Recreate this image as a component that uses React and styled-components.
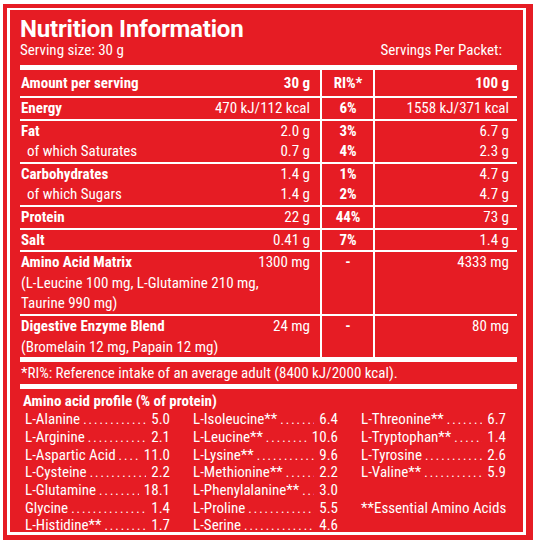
import React from 'react'
import styled, { createGlobalStyle } from 'styled-components'

const RED = '#e61c24'
const FONT = 'Roboto, "Liberation Sans", sans-serif'

const GlobalStyle = createGlobalStyle`
  html, body {
    margin: 0;
    background: #fff;
  }
  body {
    font-family: ${FONT};
    font-stretch: 75%;
  }
`

const Frame = styled.div`
  box-sizing: border-box;
  width: 530px;
  margin: 4px 0 0 3px;
  border: solid ${RED};
  border-width: 4px 7px 5px 4px;
  padding: 2px 3px 3px 3px;
  background: #fff;
`

const Panel = styled.div`
  box-sizing: border-box;
  height: 522px;
  background: ${RED};
  color: #fff;
  padding: 7px 6px 0 10px;
  font-size: 15px;
`

const Title = styled.h1`
  margin: 0;
  font-size: 24px;
  line-height: 25px;
  font-weight: 700;
  font-stretch: 100%;
  letter-spacing: -0.2px;
`

const ServingBar = styled.div`
  display: flex;
  justify-content: space-between;
  align-items: baseline;
  line-height: 18px;
  margin-top: -1px;
  padding: 0 15px 6px 0;
  border-bottom: 5px solid #fff;
`

const Table = styled.div`
  border-bottom: 5px solid #fff;
`

const Row = styled.div`
  display: grid;
  grid-template-columns: 300px 53px 144px;
  border-bottom: ${p => (p.$last ? 'none' : '2px solid #fff')};
  line-height: ${p => (p.$head ? '26px' : '20.6px')};
  font-weight: ${p => (p.$head ? 700 : 400)};
  font-stretch: ${p => (p.$head ? '80%' : 'inherit')};
`

const Cell = styled.div`
  box-sizing: border-box;
  padding: ${p => p.$pad};
  border-left: ${p => (p.$first ? 'none' : '2px solid #fff')};
  text-align: ${p => p.$align || 'left'};
  font-weight: ${p => (p.$bold ? 700 : 'inherit')};
  font-stretch: ${p => (p.$bold ? '80%' : 'inherit')};
`

const Line = styled.div`
  display: flex;
  justify-content: space-between;
  white-space: nowrap;
`

const Label = styled.span`
  font-weight: ${p => (p.$bold ? 700 : 'inherit')};
  font-stretch: ${p => (p.$bold ? '80%' : 'inherit')};
  padding-left: ${p => (p.$sub ? '7px' : '1px')};
`

const Note = styled.div`
  padding-left: 1px;
`

const Footnote = styled.div`
  line-height: 22px;
  padding-left: 1px;
  border-bottom: 5px solid #fff;
`

const Profile = styled.div`
  padding: 3px 0 0 3px;
`

const ProfileTitle = styled.div`
  font-weight: 700;
  font-stretch: 80%;
  line-height: 19px;
`

const ProfileGrid = styled.div`
  display: grid;
  grid-template-columns: repeat(3, 145px);
  column-gap: 23px;
  padding-left: 2px;
`

const Item = styled.div`
  display: flex;
  height: 17.7px;
  line-height: 17.7px;
  white-space: nowrap;
`

const Dots = styled.span`
  flex: 1;
  min-width: 0;
  overflow: hidden;
  margin: 0 5px 0 3px;
  letter-spacing: 2px;
  font-size: 13px;
`

const Essential = styled.div`
  line-height: 17.7px;
  margin-top: 17.7px;
  white-space: nowrap;
`

const rows = [
  [{ label: 'Energy', bold: true, a: '470 kJ/112 kcal', ri: '6%', b: '1558 kJ/371 kcal' }],
  [
    { label: 'Fat', bold: true, a: '2.0 g', ri: '3%', b: '6.7 g' },
    { label: 'of which Saturates', sub: true, a: '0.7 g', ri: '4%', b: '2.3 g' },
  ],
  [
    { label: 'Carbohydrates', bold: true, a: '1.4 g', ri: '1%', b: '4.7 g' },
    { label: 'of which Sugars', sub: true, a: '1.4 g', ri: '2%', b: '4.7 g' },
  ],
  [{ label: 'Protein', bold: true, a: '22 g', ri: '44%', b: '73 g' }],
  [{ label: 'Salt', bold: true, a: '0.41 g', ri: '7%', b: '1.4 g' }],
  [
    { label: 'Amino Acid Matrix', bold: true, a: '1300 mg', ri: '-', b: '4333 mg' },
    { note: '(L-Leucine 100 mg, L-Glutamine 210 mg,' },
    { note: 'Taurine 990 mg)' },
  ],
  [
    { label: 'Digestive Enzyme Blend', bold: true, a: '24 mg', ri: '-', b: '80 mg' },
    { note: '(Bromelain 12 mg, Papain 12 mg)' },
  ],
]

const amino = [
  [
    ['L-Alanine', '5.0'],
    ['L-Arginine', '2.1'],
    ['L-Aspartic Acid', '11.0'],
    ['L-Cysteine', '2.2'],
    ['L-Glutamine', '18.1'],
    ['Glycine', '1.4'],
    ['L-Histidine**', '1.7'],
  ],
  [
    ['L-Isoleucine**', '6.4'],
    ['L-Leucine**', '10.6'],
    ['L-Lysine**', '9.6'],
    ['L-Methionine**', '2.2'],
    ['L-Phenylalanine**', '3.0'],
    ['L-Proline', '5.5'],
    ['L-Serine', '4.6'],
  ],
  [
    ['L-Threonine**', '6.7'],
    ['L-Tryptophan**', '1.4'],
    ['L-Tyrosine', '2.6'],
    ['L-Valine**', '5.9'],
  ],
]

const DOTS = '..............................................'

function NutrientRow({ lines, last }) {
  return (
    <Row $last={last}>
      <Cell $first $pad="0 10px 0 0">
        {lines.map((l, i) =>
          l.note ? (
            <Note key={i}>{l.note}</Note>
          ) : (
            <Line key={i}>
              <Label $bold={l.bold} $sub={l.sub}>{l.label}</Label>
              <span>{l.a}</span>
            </Line>
          )
        )}
      </Cell>
      <Cell $align="center" $pad="0 0 0 1px" $bold>
        {lines.filter(l => !l.note).map((l, i) => (
          <div key={i}>{l.ri}</div>
        ))}
      </Cell>
      <Cell $align="right" $pad="0 8px 0 0">
        {lines.filter(l => !l.note).map((l, i) => (
          <div key={i}>{l.b}</div>
        ))}
      </Cell>
    </Row>
  )
}

export default function App() {
  return (
    <>
      <GlobalStyle />
      <Frame>
        <Panel>
          <Title>Nutrition Information</Title>
          <ServingBar>
            <span>Serving size: 30 g</span>
            <span>Servings Per Packet:</span>
          </ServingBar>

          <Table>
            <Row $head>
              <Cell $first $pad="0 10px 0 0">
                <Line>
                  <Label>Amount per serving</Label>
                  <span>30 g</span>
                </Line>
              </Cell>
              <Cell $align="center" $pad="0 0 0 1px">RI%*</Cell>
              <Cell $align="right" $pad="0 8px 0 0">100 g</Cell>
            </Row>
            {rows.map((lines, i) => (
              <NutrientRow key={i} lines={lines} last={i === rows.length - 1} />
            ))}
          </Table>

          <Footnote>*RI%: Reference intake of an average adult (8400 kJ/2000 kcal).</Footnote>

          <Profile>
            <ProfileTitle>Amino acid profile (% of protein)</ProfileTitle>
            <ProfileGrid>
              {amino.map((col, c) => (
                <div key={c}>
                  {col.map(([name, val]) => (
                    <Item key={name}>
                      <span>{name}</span>
                      <Dots>{DOTS}</Dots>
                      <span>{val}</span>
                    </Item>
                  ))}
                  {c === 2 && <Essential>**Essential Amino Acids</Essential>}
                </div>
              ))}
            </ProfileGrid>
          </Profile>
        </Panel>
      </Frame>
    </>
  )
}
